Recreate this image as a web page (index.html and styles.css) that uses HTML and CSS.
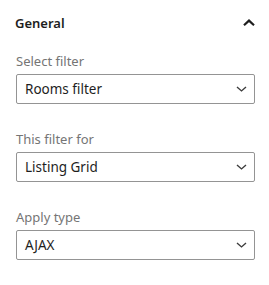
FILE: index.html
```html
<!DOCTYPE html>
<html>
<head>
<meta charset="utf-8">
<link rel="stylesheet" href="styles.css">
</head>
<body>
<div class="panel">
  <div class="panel-header">
    <span class="panel-title">General</span>
    <svg class="toggle-icon" width="12" height="7" viewBox="0 0 12 7"><polyline points="1,6.2 6,1.6 11,6.2"/></svg>
  </div>
  <div class="panel-body">
    <div class="control">
      <label class="control-label">Select filter</label>
      <div class="select">
        <span class="select-value">Rooms filter</span>
        <svg class="select-icon" width="11" height="6" viewBox="0 0 11 6"><polyline points="1,0.9 5.5,4.9 10,0.9"/></svg>
      </div>
    </div>
    <div class="control">
      <label class="control-label">This filter for</label>
      <div class="select">
        <span class="select-value">Listing Grid</span>
        <svg class="select-icon" width="11" height="6" viewBox="0 0 11 6"><polyline points="1,0.9 5.5,4.9 10,0.9"/></svg>
      </div>
    </div>
    <div class="control">
      <label class="control-label">Apply type</label>
      <div class="select">
        <span class="select-value">AJAX</span>
        <svg class="select-icon" width="11" height="6" viewBox="0 0 11 6"><polyline points="1,0.9 5.5,4.9 10,0.9"/></svg>
      </div>
    </div>
  </div>
</div>
</body>
</html>
```
FILE: styles.css
```css
html, body {
  margin: 0;
  padding: 0;
  background: #ffffff;
}
body {
  font-family: "Noto Sans", "Open Sans", sans-serif;
  color: #1e1e1e;
  width: 269px;
  height: 285px;
  overflow: hidden;
}
.panel {
  display: flex;
  flex-direction: column;
}
.panel-header {
  height: 46px;
  display: flex;
  align-items: center;
  justify-content: space-between;
  padding: 0 14px 0 15px;
  box-sizing: border-box;
}
.panel-title {
  font-size: 13px;
  font-weight: 600;
  line-height: 18px;
}
.toggle-icon {
  fill: none;
  stroke: #1e1e1e;
  stroke-width: 2.2;
  display: block;
  margin-top: -1px;
}
.panel-body {
  padding: 6px 14px 0 16px;
  display: flex;
  flex-direction: column;
  gap: 26px;
}
.control {
  display: flex;
  flex-direction: column;
  gap: 4px;
}
.control-label {
  font-size: 13px;
  line-height: 18px;
  color: #757575;
}
.select {
  height: 30px;
  box-sizing: border-box;
  border: 1px solid #949494;
  border-radius: 2px;
  display: flex;
  align-items: center;
  justify-content: space-between;
  padding: 0 7px 0 8px;
}
.select-value {
  font-size: 13.5px;
  line-height: 18px;
  color: #1e1e1e;
}
.select-icon {
  fill: none;
  stroke: #3c3c3c;
  stroke-width: 1.4;
  display: block;
}
```
